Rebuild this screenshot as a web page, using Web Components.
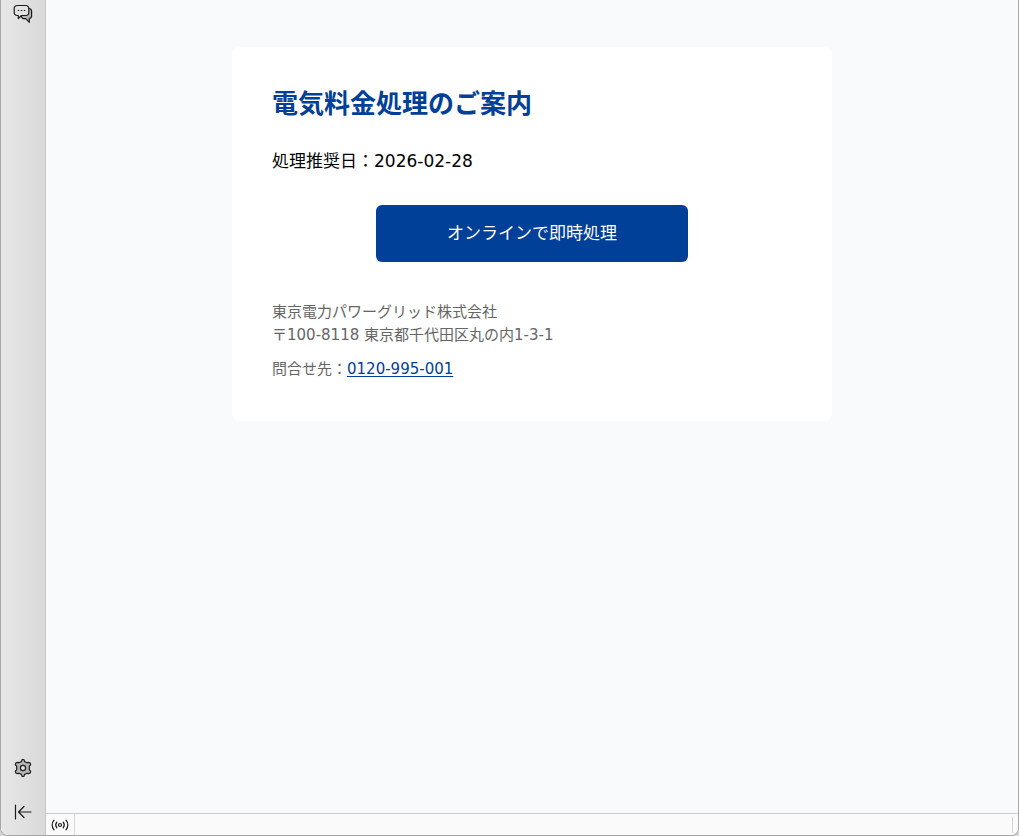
<!DOCTYPE html>
<html lang="ja">
<head>
<meta charset="utf-8">
<meta name="viewport" content="width=device-width, initial-scale=1">
<title>電気料金処理のご案内</title>
<style>
body { margin: 0; background: #d4d4d4; font-family: "DejaVu Sans", "Noto Sans CJK JP", sans-serif; color: #000; }
</style>
</head>
<body>
<app-window>
  <side-bar slot="side"></side-bar>
  <notice-card>
    <span slot="title">電気料金処理のご案内</span>
    <span slot="date">処理推奨日：2026-02-28</span>
    <action-button slot="action">オンラインで即時処理</action-button>
    <contact-info slot="contact" phone="0120-995-001">
      <span slot="company">東京電力パワーグリッド株式会社</span>
      <span slot="address">〒100-8118 東京都千代田区丸の内1-3-1</span>
      <span slot="label">問合せ先：</span>
    </contact-info>
  </notice-card>
  <status-bar slot="status"></status-bar>
</app-window>

<script>
function define(name, html) {
  customElements.define(name, class extends HTMLElement {
    constructor() {
      super();
      this.attachShadow({ mode: "open" }).innerHTML = html;
    }
    connectedCallback() {
      const phone = this.getAttribute("phone");
      if (phone) {
        const link = this.shadowRoot.querySelector("a");
        link.textContent = phone;
        link.href = "tel:" + phone;
      }
    }
  });
}

define("app-window", `
<style>
:host { display: flex; box-sizing: border-box; min-height: 100vh; border: 1px solid #a6a6a6; border-top: 0; border-radius: 0 0 8px 8px; overflow: hidden; background: #f8fafc; }
.content { flex: 1; min-width: 0; display: flex; flex-direction: column; }
main { flex: 1; padding: 47px 16px; }
</style>
<slot name="side"></slot>
<div class="content"><main><slot></slot></main><slot name="status"></slot></div>`);

define("side-bar", `
<style>
:host { display: flex; box-sizing: border-box; width: 45px; flex: none; background: linear-gradient(90deg, #e7e7e7, #d9d9d9); border-right: 1px solid #c6c6c6; }
nav { flex: 1; display: flex; flex-direction: column; align-items: center; padding-bottom: 11px; }
button { border: 0; padding: 0; background: none; width: 32px; height: 24px; display: grid; place-items: center; color: #1c1c1c; }
.chat { height: 28px; }
.settings { margin-top: auto; margin-bottom: 20px; }
svg { display: block; width: 20px; height: 20px; fill: none; stroke: currentColor; stroke-width: 1.2; stroke-linecap: round; stroke-linejoin: round; }
</style>
<nav aria-label="メール">
<button class="chat" aria-label="チャット"><svg viewBox="0 0 20 20"><path fill="#b4b4b4" d="M14 4.5h2a2.6 2.6 0 0 1 2.6 2.8v4.4a2.8 2.8 0 0 1-2.3 2.8v3.8l-3.6-3.6H10l-2-2.2z"/><path fill="#e2e2e2" d="M4 1.5h9A2.8 2.8 0 0 1 15.8 4.3v4.4a2.8 2.8 0 0 1-2.8 2.8H8.5l-3.2 3v-3H4A2.8 2.8 0 0 1 1.2 8.7V4.3A2.8 2.8 0 0 1 4 1.5z"/><path d="M5.2 6.5h.5m2.5 0h.6m2.5 0h.5"/></svg></button>
<button class="settings" aria-label="設定"><svg viewBox="0 0 20 20"><path fill="#b4b4b4" d="M8.4 3.4 9.2 1.5h1.6l.8 1.9 2.2 1.3 2.2-.3 1.2.7.5 1.5-1.4 1.8v3.2l1.4 1.8-.5 1.5-1.2.7-2.2-.3-2.2 1.3-.8 1.9H9.2l-.8-1.9-2.2-1.3-2.2.3-1.2-.7-.5-1.5 1.4-1.8V8.4L2.3 6.6l.5-1.5L4 4.4l2.2.3z"/><circle cx="10" cy="10" r="2.6" fill="#e2e2e2"/></svg></button>
<button aria-label="サイドバーを折りたたむ"><svg viewBox="0 0 20 20"><path d="M2.5 3v14M18 10H5.5M11 4.5 5.5 10l5.5 5.5"/></svg></button>
</nav>`);

define("notice-card", `
<style>
:host { display: block; box-sizing: border-box; max-width: 600px; margin: 0 auto; padding: 40px; border-radius: 8px; background: #fff; }
h1 { margin: 0 0 27px; font-size: 26px; line-height: 34px; font-weight: 700; color: #004098; }
p { margin: 0 0 31px; font-size: 17px; line-height: 26px; }
</style>
<h1><slot name="title"></slot></h1>
<p><slot name="date"></slot></p>
<slot name="action"></slot>
<slot name="contact"></slot>`);

define("action-button", `
<style>
:host { display: block; width: 60%; margin: 0 auto 39px; }
button { display: block; width: 100%; border: 0; border-radius: 6px; padding: 15px 16px 16px; background: #004098; color: #fff; font: inherit; font-size: 17px; line-height: 26px; }
</style>
<button type="button"><slot></slot></button>`);

define("contact-info", `
<style>
:host { display: block; color: #666; font-size: 15px; line-height: 23px; }
p { margin: 0; }
.phone { margin-top: 11px; }
a { color: #004098; text-decoration: underline; text-underline-offset: 2px; }
</style>
<p><slot name="company"></slot></p>
<p><slot name="address"></slot></p>
<p class="phone"><slot name="label"></slot><a href="#"></a></p>`);

define("status-bar", `
<style>
:host { display: flex; box-sizing: border-box; height: 22px; border-top: 1px solid #cccdd0; background: #fafafa; justify-content: space-between; }
button { box-sizing: border-box; width: 29px; border: 0; border-right: 1px solid #d9d9d9; padding: 0; background: none; display: grid; place-items: center; color: #1c1c1c; }
svg { display: block; width: 18px; height: 16px; fill: none; stroke: currentColor; stroke-width: 1.2; stroke-linecap: round; }
.grip { width: 1px; margin: 3px 5px 2px; background: #d4d4d4; }
</style>
<button aria-label="接続状態"><svg viewBox="0 0 18 16"><circle cx="9" cy="8" r="1.5"/><path d="M5.8 5.2a4.6 4.6 0 0 0 0 5.6M12.2 5.2a4.6 4.6 0 0 1 0 5.6M3 3.2a7.2 7.2 0 0 0 0 9.6M15 3.2a7.2 7.2 0 0 1 0 9.6"/></svg></button>
<div class="grip"></div>`);
</script>
</body>
</html>
